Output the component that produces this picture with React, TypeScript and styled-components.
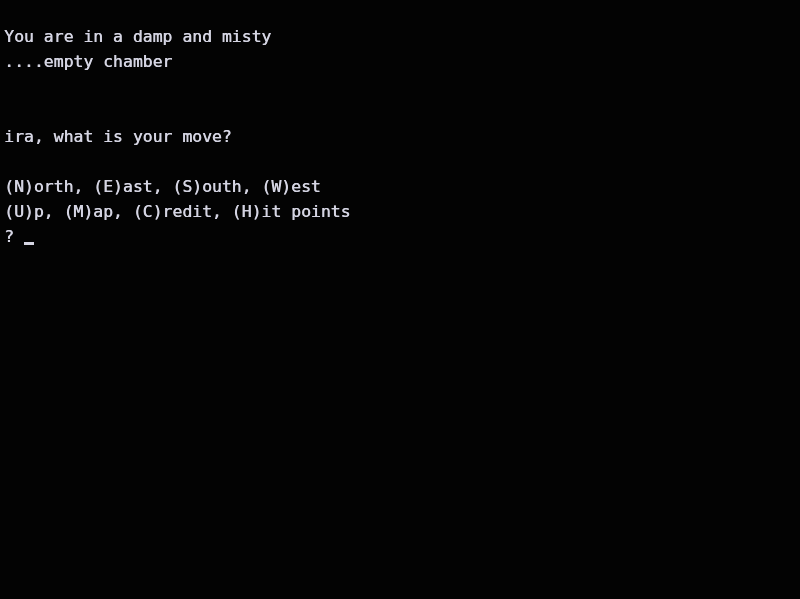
import React from "react";
import styled, { createGlobalStyle } from "styled-components";

const Global = createGlobalStyle`
  html, body { margin: 0; padding: 0; background: #030303; }
  #root { min-height: 100vh; }
`;

const Screen = styled.div`
  width: 800px;
  height: 599px;
  background: #030303;
  padding: 24px 0 0 4px;
  box-sizing: border-box;
  overflow: hidden;
`;

const Line = styled.div`
  font-family: "DejaVu Sans Mono", "Liberation Mono", monospace;
  font-size: 16.45px;
  line-height: 25px;
  height: 25px;
  color: #d4d4e2;
  white-space: pre;
  text-shadow: 0.5px 0 0 #d4d4e2;
  filter: blur(0.4px);
`;

const Cursor = styled.span`
  display: inline-block;
  width: 10px;
  height: 3px;
  background: #d4d4e2;
  vertical-align: baseline;
  margin-bottom: -3px;
`;

const lines = [
  "You are in a damp and misty",
  "....empty chamber",
  "",
  "",
  "ira, what is your move?",
  "",
  "(N)orth, (E)ast, (S)outh, (W)est",
  "(U)p, (M)ap, (C)redit, (H)it points",
];

export default function App() {
  return (
    <>
      <Global />
      <Screen>
        {lines.map((l, i) => (
          <Line key={i}>{l}</Line>
        ))}
        <Line>
          {"? "}
          <Cursor />
        </Line>
      </Screen>
    </>
  );
}
